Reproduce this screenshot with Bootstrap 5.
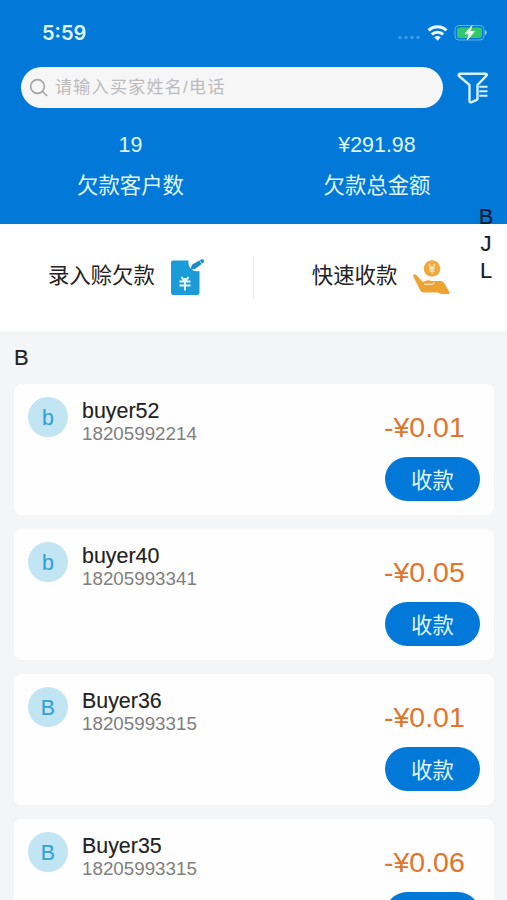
<!DOCTYPE html>
<html lang="zh-CN">
<head>
<meta charset="utf-8">
<meta name="viewport" content="width=device-width, initial-scale=1">
<title>欠款客户</title>
<link href="https://cdn.jsdelivr.net/npm/bootstrap@5.3.0/dist/css/bootstrap.min.css" rel="stylesheet">
<style>
body{background:#f4f5f7;font-family:"Liberation Sans","Noto Sans CJK SC",sans-serif;color:#222;font-size:21.4px;line-height:26px}
.screen{height:900px}
.hero{height:224px;background:#0278d9;color:#e0f6ff}
.status{height:67px;padding:0 20px 2px 42px}
.clock{font:600 20px/24px Inter,sans-serif;color:#e0f6ff}
.search-row{padding-left:21px;padding-right:18px}
.search{width:422px;height:41px;background:#f6f6f7;padding-left:8px;gap:6px}
.search span{font-size:17px;letter-spacing:1.3px;color:#bbb;padding-top:1px}
.stats{padding:24px 0 0 7px}
.stats .figure-label{margin-top:15px}
.stat-a{width:247px}
.stat-b{width:246px}
.actions{height:106.5px;background:#fff}
.actions span{margin-top:-2px}
.quick-pay{padding-left:1px}
.rule{width:1.5px;height:41px;background:#ececee}
.letter{height:53.5px;padding:2px 0 0 14px;font-size:22px}
.letter,.jump,.buyer-name{-webkit-text-stroke:.15px currentColor}
.buyers{padding:0 13px 0 14px;gap:14px}
.buyer{height:131px;border-radius:8px;padding:13px 14px;flex-shrink:0;background:#fefefe}
.avatar{width:40px;height:40px;padding-top:2px;background:#c1e5f3;color:#36a2d4;font-size:21.4px;-webkit-text-stroke:.15px currentColor}
.who{padding:1px 0 0 14px}
.phone{font-size:18.8px;line-height:22px;color:#808080;margin-top:-1px}
.pay-side{width:95px;padding-top:13px}
.amount{font-size:28.5px;line-height:34px;color:#e0752b;margin-left:-1px}
.pay{height:44px;width:95px;margin-top:13px;background:#0278d9;color:#e0f6ff;font-size:21.4px;line-height:26px}
.pay.btn{padding:3px 0 0}
.jump{right:0;top:203px;width:42px;line-height:27.2px;font-size:22px;color:#111c2b}
</style>
<script src="https://cdn.jsdelivr.net/npm/bootstrap@5.3.0/dist/js/bootstrap.bundle.min.js"></script>
</head>
<body>
<div class="screen position-relative overflow-hidden">
<header class="hero">
  <div class="status d-flex align-items-center justify-content-between">
    <span class="clock">5:59</span>
    <svg width="92" height="22" viewBox="0 0 92 22">
      <g fill="#3f9be6"><circle cx="5" cy="15.500" r="1.700"/><circle cx="11" cy="15.500" r="1.700"/><circle cx="17" cy="15.500" r="1.700"/><circle cx="23" cy="15.500" r="1.700"/></g>
      <g fill="none" stroke="#eefbff" stroke-width="3"><path d="M33.500 8.300a13.500 13.500 0 0 1 18 0"/><path d="M36.800 12.400a8.300 8.300 0 0 1 11.400 0"/></g>
      <path d="M39.200 15.200q3.300-2.400 6.600 0L42.500 18.700z" fill="#eefbff"/>
      <rect x="60" y="3.500" width="29" height="14.500" rx="4" fill="none" stroke="#65afe5"/>
      <rect x="62" y="5.500" width="25" height="10.500" rx="2" fill="#34c86c"/>
      <path d="M90.500 8.500q1.500 2 0 4z" fill="#9bd0f2" stroke="#9bd0f2"/>
      <path d="M77 3.500l-7 8.300h4.200l-2 6.200 7.300-8.500h-4.300z" fill="#f4fff8" stroke="#f4fff8" stroke-width=".8"/>
    </svg>
  </div>
  <div class="search-row d-flex align-items-center justify-content-between">
    <div class="search rounded-pill d-flex align-items-center">
      <svg width="20" height="20" viewBox="0 0 20 20" fill="none" stroke="#a5a3a2" stroke-width="1.600"><circle cx="8.500" cy="8.500" r="6.900"/><path d="M13.500 13.500l4.700 4.500"/></svg>
      <span>请输入买家姓名/电话</span>
    </div>
    <svg width="32" height="32" viewBox="0 0 32 32" fill="none" stroke="#d6f1ff" stroke-width="2.400" stroke-linejoin="round">
      <path d="M3 1.800h25.500q2 .2 1 1.900L20.500 13v13.500q0 1.200-1.200 1.700l-4.500 2q-2.300.6-2.300-1.500V13L2 4Q.8 2 3 1.800z"/>
      <path d="M22.300 14.800h8.200M22.300 19.300h8.200M22.300 23.800h8.200" stroke-width="2"/>
    </svg>
  </div>
  <div class="stats d-flex text-center">
    <div class="stat-a"><div>19</div><div class="figure-label">欠款客户数</div></div>
    <div class="stat-b"><div>¥291.98</div><div class="figure-label">欠款总金额</div></div>
  </div>
</header>

<section class="actions d-flex align-items-center">
  <div class="d-flex align-items-center justify-content-center w-50">
    <span>录入赊欠款</span>
    <svg class="ms-3" width="34" height="38" viewBox="0 0 34 38">
      <path d="M2 2.500h15.500q-.5 5.500 2.500 8.500 3 3 8.500 2v21.500q0 2.500-2.500 2.500H2.500Q0 37 0 34.500V4.500Q0 2.500 2 2.500z" fill="#1b9cd9"/>
      <path d="M19.300 11.800l1.700-5L30 1.500q1.700-.9 2.800.5.900 1.600-.5 2.700L24 11z" fill="#1b8bc9"/>
      <path d="M28.500 2.300l2.300 3.500" stroke="#fff" stroke-width=".8"/>
      <path d="M10.500 19l3.500 5 3.500-5M8.500 23.500h11M8.500 27.500h11M14 20v12.500" fill="none" stroke="#e4f6fc" stroke-width="2"/>
    </svg>
  </div>
  <div class="rule"></div>
  <div class="quick-pay d-flex align-items-center justify-content-center w-50">
    <span>快速收款</span>
    <svg class="ms-3" width="37" height="37" viewBox="0 0 37 37">
      <circle cx="19" cy="9.500" r="8.300" fill="#f0a93a"/>
      <path d="M16 5l3 4.500L22 5M16 9.500h6M16.500 12h5M19 9v5.500" fill="none" stroke="#fbe4b5" stroke-width="1.500"/>
      <path d="M.5 16q1.700-1.900 3.300.4l5.500 6.100q1.200.7 3-.4 3-1.700 5.700-.1h10q2 0 3 1.700l5.500 9.500q.7 1.800-1 1.800h-7l-3.500-1.500H11q-3-.2-4.500-3.500L.8 18.500q-.8-1.400-.3-2.500z" fill="#eca32f"/>
      <path d="M11.500 25.300h7q2.500-.2 2.300-1.600" fill="none" stroke="#fbe4b5" stroke-width="1.300" stroke-linecap="round"/>
    </svg>
  </div>
</section>

<div class="letter d-flex align-items-center">B</div>

<main class="buyers d-flex flex-column">
  <article class="buyer d-flex align-items-start">
    <div class="avatar rounded-circle d-flex align-items-center justify-content-center">b</div>
    <div class="who flex-grow-1"><div class="buyer-name">buyer52</div><div class="phone">18205992214</div></div>
    <div class="pay-side"><div class="amount">-¥0.01</div><button class="pay btn rounded-pill border-0">收款</button></div>
  </article>
  <article class="buyer d-flex align-items-start">
    <div class="avatar rounded-circle d-flex align-items-center justify-content-center">b</div>
    <div class="who flex-grow-1"><div class="buyer-name">buyer40</div><div class="phone">18205993341</div></div>
    <div class="pay-side"><div class="amount">-¥0.05</div><button class="pay btn rounded-pill border-0">收款</button></div>
  </article>
  <article class="buyer d-flex align-items-start">
    <div class="avatar rounded-circle d-flex align-items-center justify-content-center">B</div>
    <div class="who flex-grow-1"><div class="buyer-name">Buyer36</div><div class="phone">18205993315</div></div>
    <div class="pay-side"><div class="amount">-¥0.01</div><button class="pay btn rounded-pill border-0">收款</button></div>
  </article>
  <article class="buyer d-flex align-items-start">
    <div class="avatar rounded-circle d-flex align-items-center justify-content-center">B</div>
    <div class="who flex-grow-1"><div class="buyer-name">Buyer35</div><div class="phone">18205993315</div></div>
    <div class="pay-side"><div class="amount">-¥0.06</div><button class="pay btn rounded-pill border-0 d-block"></button></div>
  </article>
</main>

<nav class="jump position-absolute text-center"><div>B</div><div>J</div><div>L</div></nav>
</div>
</body>
</html>
